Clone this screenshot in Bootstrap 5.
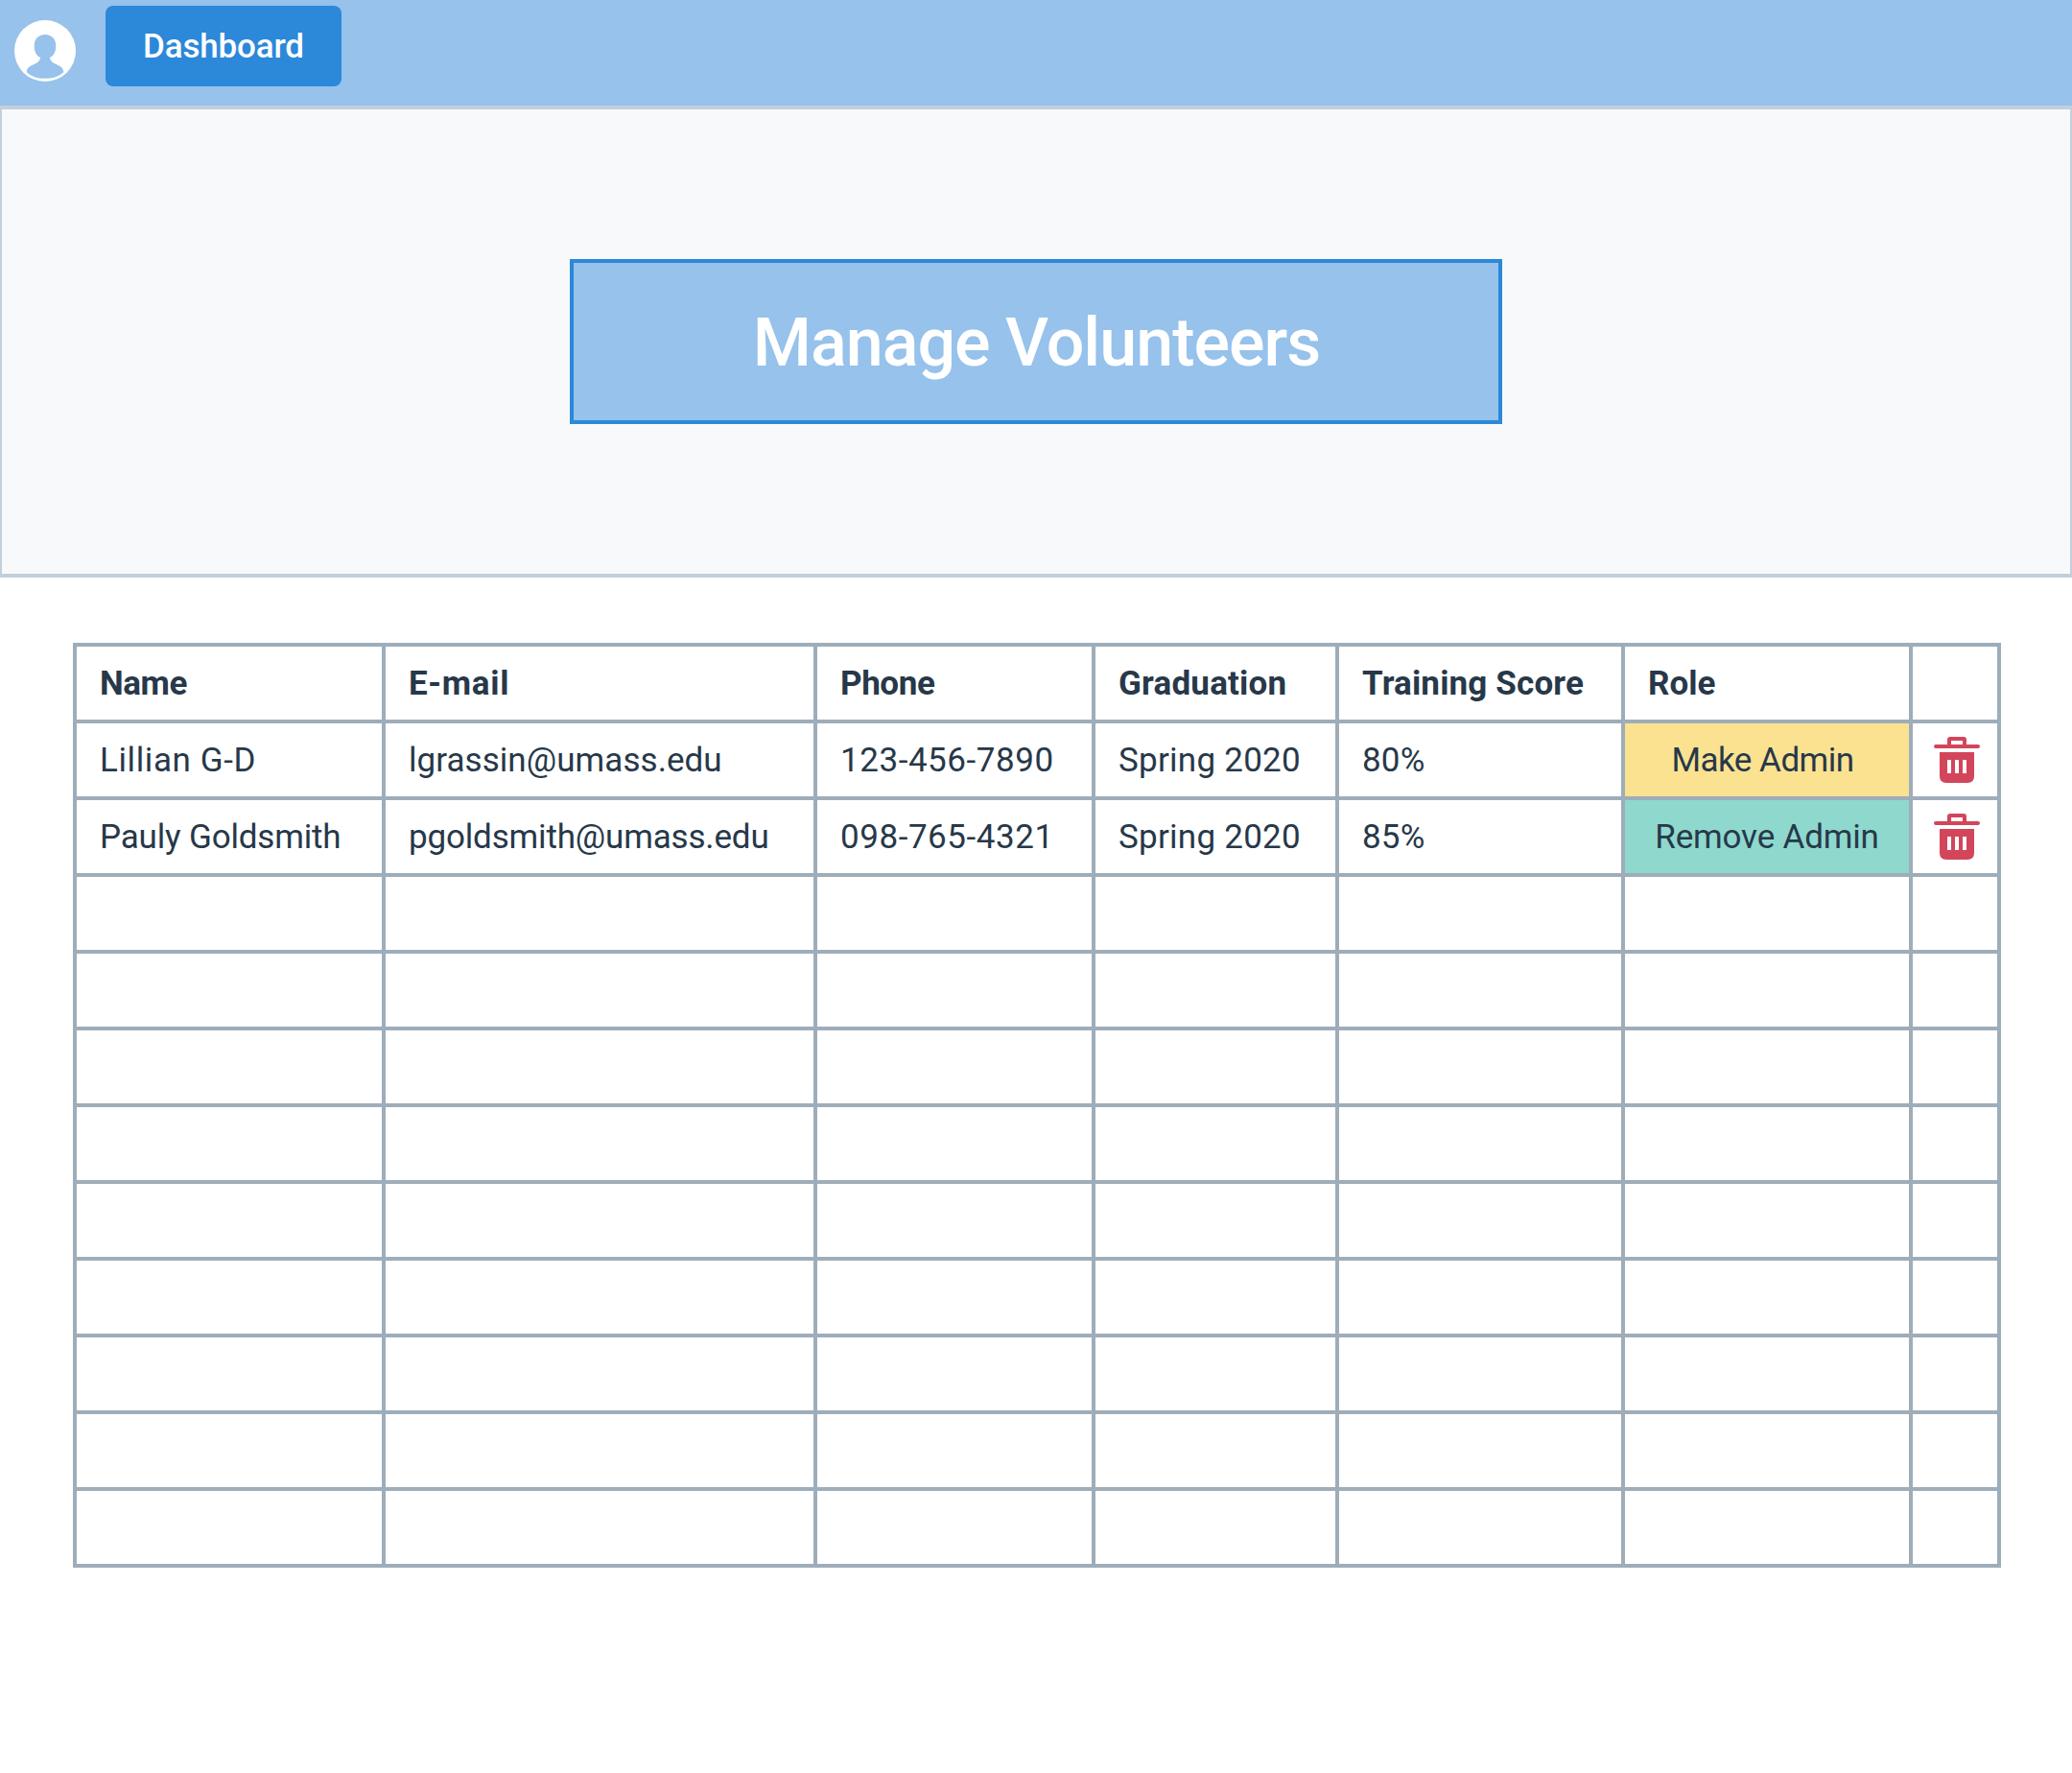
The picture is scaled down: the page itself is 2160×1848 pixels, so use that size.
<!DOCTYPE html>
<html lang="en">
<head>
<meta charset="utf-8">
<meta name="viewport" content="width=device-width, initial-scale=1">
<title>Manage Volunteers</title>
<link href="https://cdn.jsdelivr.net/npm/bootstrap@5.3.0/dist/css/bootstrap.min.css" rel="stylesheet">
<style>
  body { font-family: Roboto, "Liberation Sans", sans-serif; font-size: 35px; line-height: 40px; color: #273849; background: #fff; }
  .topbar { height: 110px; background: #96c2eb; padding: 6px 0 0 15px; }
  .avatar { width: 64px; height: 64px; margin: 15px 31px 0 0; }
  .btn-dash { --bs-btn-color: #fff; --bs-btn-bg: #2c88d9; --bs-btn-hover-color: #fff; --bs-btn-hover-bg: #2477c0;
    width: 246px; height: 84px; padding: 1px 0 0; border: 0; border-radius: 8px; font-size: 35px; font-weight: 500; line-height: 84px; letter-spacing: -.17px; }
  .hero { height: 492px; background: #f8f9fb; border: solid #c3cfd9; border-width: 4px 2px; }
  .hero-title { width: 972px; height: 172px; padding: 1px 0 0 1px; background: #96c2eb; border: 4px solid #2c88d9; color: #fff; font-size: 70px; font-weight: 500; line-height: 80px; letter-spacing: -.99px; }
  .roster-wrap { padding: 68px 74px 0 76px; }
  .roster { width: 2010px; table-layout: fixed; border-collapse: collapse; color: inherit; }
  .roster th, .roster td { height: 80px; padding: 2px 0 0 24px; border: 4px solid #9eadba; white-space: nowrap; vertical-align: middle; }
  .roster tr { height: 80px; }
  .roster td.role { padding: 2px 0 0; text-align: center; }
  .roster td.role-make { background: #fae291; padding-right: 9px; letter-spacing: -.51px; }
  .roster td.role-remove { background: #8ed8ce; letter-spacing: -.19px; }
  .roster td.del { padding: 0 0 0 22px; }
  .trash { display: block; width: 48px; height: 48px; fill: #d3455b; }
  .t-name { letter-spacing: -.45px; } .t-mail { letter-spacing: .68px; } .t-phone { letter-spacing: -.4px; }
  .t-grad { letter-spacing: .2px; } .t-num { letter-spacing: .55px; } .t-term { letter-spacing: .25px; }
  .t-score { letter-spacing: .15px; } .t-pct { letter-spacing: .2px; } .t-short { letter-spacing: .6px; }
  .t-long { letter-spacing: -.17px; } .t-gmail { letter-spacing: .05px; }
</style>
</head>
<body>
<svg width="0" height="0" class="d-none">
  <symbol id="trash" viewBox="0 0 48 48">
    <path fill-rule="evenodd" d="M14 8V3Q14 0 17 0H31Q34 0 34 3V8H46A2 2 0 0 1 46 12H2A2 2 0 0 1 2 8ZM18 4V8H30V4Z"/>
    <path fill-rule="evenodd" d="M6 16H42V41Q42 48 35 48H13Q6 48 6 41ZM14 24V38H18V24ZM22 24V38H26V24ZM30 24V38H34V24Z"/>
  </symbol>
</svg>

<header class="topbar d-flex align-items-start">
  <svg class="avatar flex-shrink-0" viewBox="0 0 64 64" role="img" aria-label="Profile">
    <circle cx="32" cy="32" r="32" fill="#fff"/>
    <path fill="#96c2eb" d="M32 15C25 15 20.700 20 20.700 26.500C20.700 33 23 37.200 27.200 39.200C26.200 43 23.500 44.800 20 46.200C15.500 48 12.700 50.500 12.700 54.200C17.500 58.600 24 60.800 32 60.800C40 60.800 46.500 58.600 51.300 54.200C51.300 50.500 48.500 48 44 46.200C40.500 44.800 37.800 43 36.800 39.200C41 37.200 43.300 33 43.300 26.500C43.300 20 39 15 32 15Z"/>
  </svg>
  <a class="btn btn-dash" href="#">Dashboard</a>
</header>

<section class="hero d-flex align-items-center justify-content-center">
  <h1 class="hero-title d-flex align-items-center justify-content-center m-0">Manage Volunteers</h1>
</section>

<main class="roster-wrap">
  <table class="roster">
    <colgroup>
      <col style="width:322px"><col style="width:450px"><col style="width:290px"><col style="width:254px"><col style="width:298px"><col style="width:300px"><col style="width:92px">
    </colgroup>
    <thead>
      <tr class="fw-bold"><th class="t-name">Name</th><th class="t-mail">E-mail</th><th class="t-phone">Phone</th><th class="t-grad">Graduation</th><th class="t-score">Training Score</th><th>Role</th><th></th></tr>
    </thead>
    <tbody>
      <tr><td class="t-short">Lillian G-D</td><td class="t-gmail">lgrassin@umass.edu</td><td class="t-num">123-456-7890</td><td class="t-term">Spring 2020</td><td class="t-pct">80%</td><td class="role role-make">Make Admin</td><td class="del"><svg class="trash" role="img" aria-label="Delete"><use href="#trash"/></svg></td></tr>
      <tr><td class="t-long">Pauly Goldsmith</td><td class="t-long">pgoldsmith@umass.edu</td><td class="t-num">098-765-4321</td><td class="t-term">Spring 2020</td><td class="t-pct">85%</td><td class="role role-remove">Remove Admin</td><td class="del"><svg class="trash" role="img" aria-label="Delete"><use href="#trash"/></svg></td></tr>
      <tr><td></td><td></td><td></td><td></td><td></td><td></td><td></td></tr>
      <tr><td></td><td></td><td></td><td></td><td></td><td></td><td></td></tr>
      <tr><td></td><td></td><td></td><td></td><td></td><td></td><td></td></tr>
      <tr><td></td><td></td><td></td><td></td><td></td><td></td><td></td></tr>
      <tr><td></td><td></td><td></td><td></td><td></td><td></td><td></td></tr>
      <tr><td></td><td></td><td></td><td></td><td></td><td></td><td></td></tr>
      <tr><td></td><td></td><td></td><td></td><td></td><td></td><td></td></tr>
      <tr><td></td><td></td><td></td><td></td><td></td><td></td><td></td></tr>
      <tr><td></td><td></td><td></td><td></td><td></td><td></td><td></td></tr>
    </tbody>
  </table>
</main>
<script src="https://cdn.jsdelivr.net/npm/bootstrap@5.3.0/dist/js/bootstrap.bundle.min.js"></script>
</body>
</html>
